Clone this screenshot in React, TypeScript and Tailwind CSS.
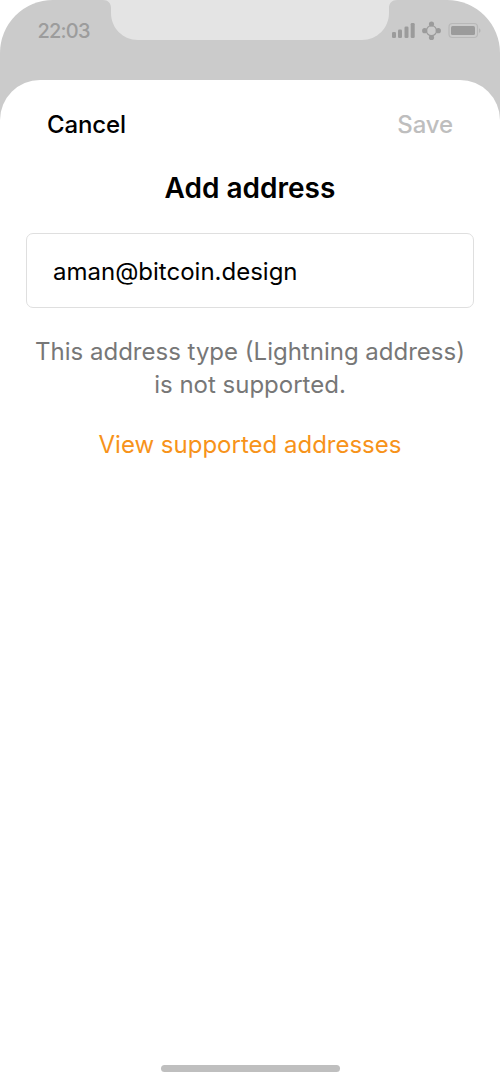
function StatusBar() {
  return (
    <header className="relative flex h-20 items-start justify-between pt-[19px] pr-[19px] pl-[37.5px]">
      <span className="text-[20px] leading-6 font-medium tracking-[-0.8px] text-[#9c9c9c]">22:03</span>
      <svg className="absolute top-0 left-[103px]" width="294" height="40" viewBox="0 0 294 40">
        <path
          d="M0 0C5 0 8 3 8 8V13C8 28 20 40 35 40H259C274 40 286 28 286 13V8C286 3 289 0 294 0Z"
          fill="#e4e4e4"
        />
      </svg>
      <svg width="90" height="24" viewBox="0 0 90 24">
        <g fill="#9b9b9b">
          <rect x="1" y="13" width="4" height="6" rx="1.3" />
          <rect x="7" y="10.5" width="4" height="8.5" rx="1.3" />
          <rect x="13.5" y="7.5" width="4" height="11.5" rx="1.3" />
          <rect x="19.7" y="4" width="4" height="15" rx="1.3" />
          <circle cx="40.5" cy="5" r="2.6" />
          <circle cx="40.5" cy="18.5" r="2.6" />
          <circle cx="33.7" cy="11.7" r="2.6" />
          <circle cx="47.3" cy="11.7" r="2.6" />
          <circle cx="40.5" cy="11.7" r="5" fill="none" stroke="#9b9b9b" strokeWidth="1.2" />
          <rect x="60" y="7" width="24" height="9" rx="1.5" />
        </g>
        <rect x="58" y="4.5" width="28.5" height="14" rx="3.5" fill="none" stroke="#b8b8b8" strokeWidth="1.2" />
        <path d="M88 9.2C90 10 90 13 88 13.8Z" fill="#b5b5b5" />
      </svg>
    </header>
  );
}

export default function App() {
  return (
    <div className="flex h-[1083px] w-[500px] flex-col overflow-hidden bg-white font-['Inter',sans-serif]">
      <div className="flex flex-1 flex-col rounded-t-[53px] bg-[#cbcbcb]">
        <StatusBar />
        <main className="flex flex-1 flex-col items-center rounded-t-[40px] bg-white px-[26px]">
          <div className="flex w-full justify-between px-[21px] pt-[29px] text-[24px] leading-8 font-medium tracking-[-0.12px]">
            <button className="text-black">Cancel</button>
            <button className="text-[#bebebe]">Save</button>
          </div>
          <h1 className="mt-[29px] text-[28px] leading-9 font-semibold text-black">Add address</h1>
          <input
            aria-label="Address"
            defaultValue="aman@bitcoin.design"
            className="mt-[27px] h-[75px] w-full rounded-[7px] border-[1.5px] border-[#dfdfdf] px-[26px] pt-[2px] text-[24px] text-black outline-none"
          />
          <p className="mt-[27px] text-center text-[24px] leading-[33px] text-[#777777]">
            This address type (Lightning address)
            <br />
            is not supported.
          </p>
          <button className="mt-[27px] text-[24px] leading-[33px] text-[#f7931a]">View supported addresses</button>
          <div className="mt-auto mb-[11px] h-[7px] w-[179px] rounded-full bg-[#bfbfbf]" />
        </main>
      </div>
    </div>
  );
}
